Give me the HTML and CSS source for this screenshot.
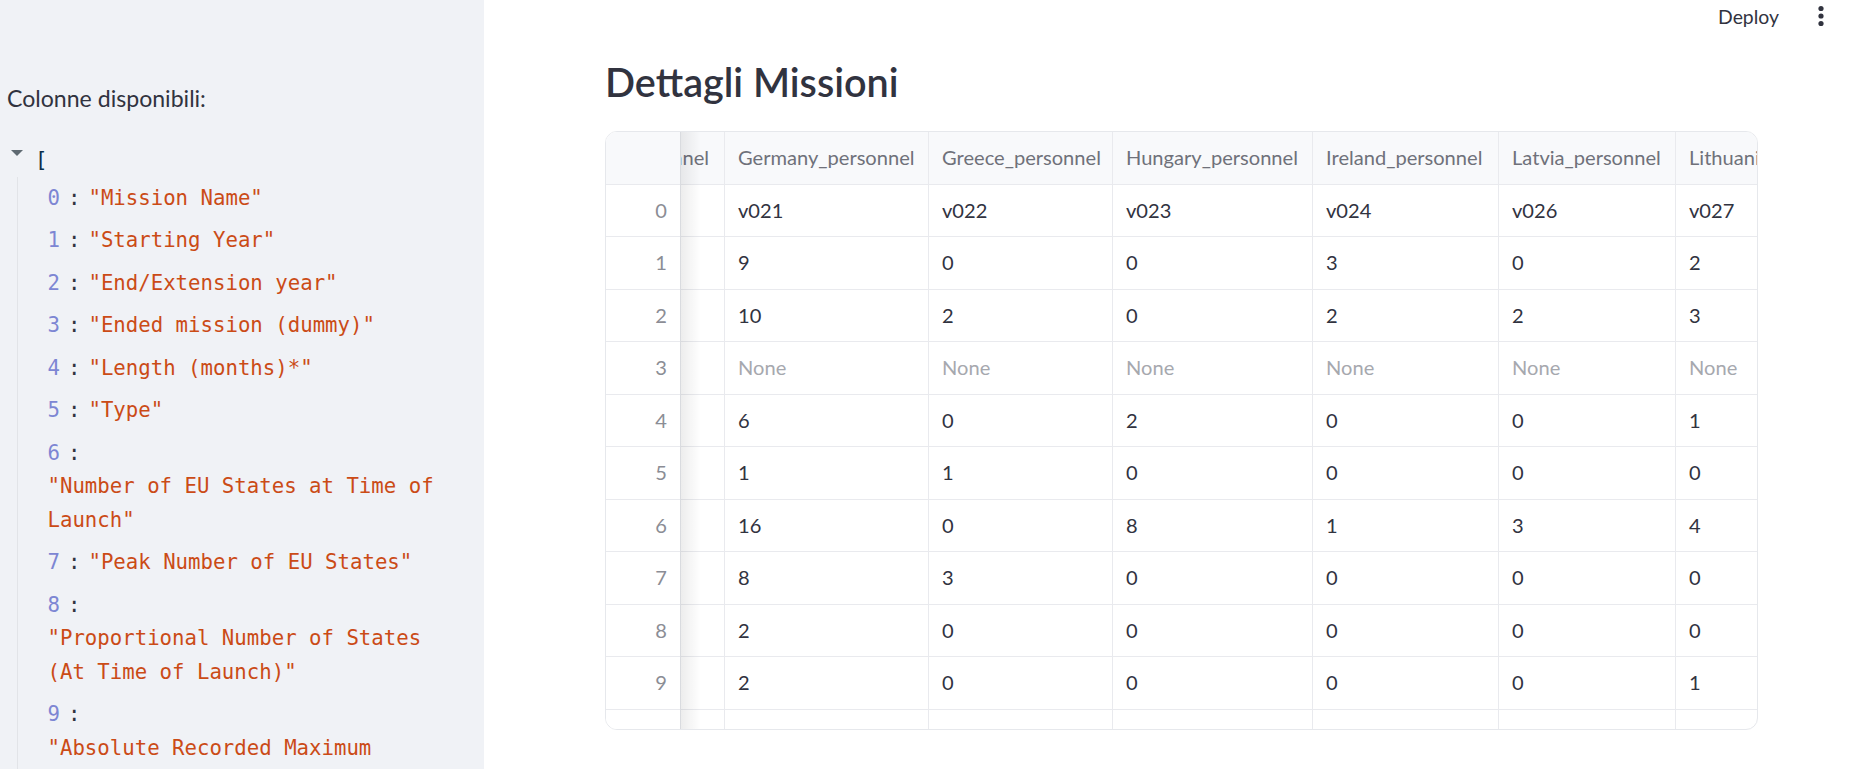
FILE: index.html
```html
<!DOCTYPE html>
<html lang="it">
<head>
<meta charset="utf-8">
<title>Dettagli Missioni</title>
<link rel="stylesheet" href="styles.css">
</head>
<body>
<div class="app">
  <aside class="sidebar">
    <p class="label">Colonne disponibili:</p>
    <div class="json">
      <div class="json-root"><span class="caret"></span><span class="bracket">[</span></div>
      <div class="json-items">
        <div class="json-item"><span class="key">0</span><span class="colon">:</span><span class="str">"Mission Name"</span></div>
        <div class="json-item"><span class="key">1</span><span class="colon">:</span><span class="str">"Starting Year"</span></div>
        <div class="json-item"><span class="key">2</span><span class="colon">:</span><span class="str">"End/Extension year"</span></div>
        <div class="json-item"><span class="key">3</span><span class="colon">:</span><span class="str">"Ended mission (dummy)"</span></div>
        <div class="json-item"><span class="key">4</span><span class="colon">:</span><span class="str">"Length (months)*"</span></div>
        <div class="json-item"><span class="key">5</span><span class="colon">:</span><span class="str">"Type"</span></div>
        <div class="json-item"><span class="key">6</span><span class="colon">:</span><span class="str">"Number of EU States at Time of Launch"</span></div>
        <div class="json-item"><span class="key">7</span><span class="colon">:</span><span class="str">"Peak Number of EU States"</span></div>
        <div class="json-item"><span class="key">8</span><span class="colon">:</span><span class="str">"Proportional Number of States (At Time of Launch)"</span></div>
        <div class="json-item"><span class="key">9</span><span class="colon">:</span><span class="str">"Absolute Recorded Maximum Personnel"</span></div>
        <div class="json-item"><span class="key">10</span><span class="colon">:</span><span class="str">"Austria_personnel"</span></div>
      </div>
    </div>
  </aside>

  <main class="main">
    <header class="toolbar">
      <button class="deploy">Deploy</button>
      <button class="menu" aria-label="Menu">
        <svg width="24" height="24" viewBox="0 0 24 24"><circle cx="12" cy="4.5" r="2.6" fill="#31333f"/><circle cx="12" cy="12" r="2.6" fill="#31333f"/><circle cx="12" cy="19.5" r="2.6" fill="#31333f"/></svg>
      </button>
    </header>

    <section class="content">
      <h3 class="title">Dettagli Missioni</h3>

      <div class="grid">
        <div class="idx">
          <div class="cell head"></div>
          <div class="cell">0</div><div class="cell">1</div><div class="cell">2</div><div class="cell">3</div><div class="cell">4</div><div class="cell">5</div><div class="cell">6</div><div class="cell">7</div><div class="cell">8</div><div class="cell">9</div><div class="cell">10</div>
        </div>
        <div class="scroller">
          <div class="strip">
            <div class="col col-clip w-france">
              <div class="cell head">France_personnel</div>
              <div class="cell"></div><div class="cell"></div><div class="cell"></div><div class="cell"></div><div class="cell"></div><div class="cell"></div><div class="cell"></div><div class="cell"></div><div class="cell"></div><div class="cell"></div><div class="cell"></div>
            </div>
            <div class="col w-germany">
              <div class="cell head">Germany_personnel</div>
              <div class="cell">v021</div><div class="cell">9</div><div class="cell">10</div><div class="cell none">None</div><div class="cell">6</div><div class="cell">1</div><div class="cell">16</div><div class="cell">8</div><div class="cell">2</div><div class="cell">2</div><div class="cell">3</div>
            </div>
            <div class="col w-greece">
              <div class="cell head">Greece_personnel</div>
              <div class="cell">v022</div><div class="cell">0</div><div class="cell">2</div><div class="cell none">None</div><div class="cell">0</div><div class="cell">1</div><div class="cell">0</div><div class="cell">3</div><div class="cell">0</div><div class="cell">0</div><div class="cell">0</div>
            </div>
            <div class="col w-hungary">
              <div class="cell head">Hungary_personnel</div>
              <div class="cell">v023</div><div class="cell">0</div><div class="cell">0</div><div class="cell none">None</div><div class="cell">2</div><div class="cell">0</div><div class="cell">8</div><div class="cell">0</div><div class="cell">0</div><div class="cell">0</div><div class="cell">0</div>
            </div>
            <div class="col w-ireland">
              <div class="cell head">Ireland_personnel</div>
              <div class="cell">v024</div><div class="cell">3</div><div class="cell">2</div><div class="cell none">None</div><div class="cell">0</div><div class="cell">0</div><div class="cell">1</div><div class="cell">0</div><div class="cell">0</div><div class="cell">0</div><div class="cell">0</div>
            </div>
            <div class="col w-latvia">
              <div class="cell head">Latvia_personnel</div>
              <div class="cell">v026</div><div class="cell">0</div><div class="cell">2</div><div class="cell none">None</div><div class="cell">0</div><div class="cell">0</div><div class="cell">3</div><div class="cell">0</div><div class="cell">0</div><div class="cell">0</div><div class="cell">0</div>
            </div>
            <div class="col w-lithuania">
              <div class="cell head">Lithuania_personnel</div>
              <div class="cell">v027</div><div class="cell">2</div><div class="cell">3</div><div class="cell none">None</div><div class="cell">1</div><div class="cell">0</div><div class="cell">4</div><div class="cell">0</div><div class="cell">0</div><div class="cell">1</div><div class="cell">0</div>
            </div>
          </div>
        </div>
      </div>
    </section>
  </main>
</div>
</body>
</html>
```

FILE: styles.css
```css
body {
  margin: 0;
  font-family: Lato, "Noto Sans", sans-serif;
  color: #31333f;
  overflow: hidden;
}

.app {
  display: flex;
  height: 100vh;
}

/* ---------- sidebar ---------- */
.sidebar {
  width: 484px;
  flex: none;
  background: #f0f2f6;
  padding: 80px 24px 0 7px;
  box-sizing: border-box;
  overflow: hidden;
}

.label {
  margin: 0;
  font-size: 23.1px;
  line-height: 36px;
}

.json {
  margin-top: 27.5px;
  font-family: "DejaVu Sans Mono", monospace;
  font-size: 20.7px;
  line-height: 33.5px;
}

.json-root {
  display: flex;
  align-items: center;
  height: 33.5px;
}

.caret {
  width: 0;
  height: 0;
  border-left: 6.5px solid transparent;
  border-right: 6.5px solid transparent;
  border-top: 6px solid #5f6a72;
  margin: 0 12px 14px 4px;
}

.bracket {
  color: #0b2e4a;
}

.json-items {
  margin-left: 9.5px;
  border-left: 1px solid #e2e4e8;
  padding-left: 30px;
}

.json-item {
  display: flex;
  flex-wrap: wrap;
  padding: 4.5px 0;
}

.key {
  color: #7d86d3;
}

.colon {
  margin: 0 8px;
  color: #31333f;
}

.str {
  color: #cb4b16;
}

/* ---------- main ---------- */
.main {
  flex: 1;
  min-width: 0;
  display: flex;
  flex-direction: column;
  background: #fff;
}

.toolbar {
  height: 32px;
  display: flex;
  justify-content: flex-end;
  align-items: center;
  padding-right: 20px;
}

.deploy {
  font-family: Lato, "Noto Sans", sans-serif;
  font-size: 19.4px;
  color: #31333f;
  background: none;
  border: 0;
  padding: 0;
  margin-right: 30px;
}

.menu {
  width: 24px;
  height: 24px;
  padding: 0;
  border: 0;
  background: none;
  display: flex;
}

.content {
  padding-left: 121px;
}

.title {
  margin: 24.5px 0 0;
  font-size: 39.6px;
  line-height: 50.4px;
  font-weight: 600;
}

/* ---------- data grid ---------- */
.grid {
  margin-top: 24px;
  width: 1153px;
  height: 599px;
  box-sizing: border-box;
  border: 1px solid #e6e8ec;
  border-radius: 12px;
  overflow: hidden;
  display: flex;
  font-size: 20.1px;
}

.idx {
  width: 75px;
  flex: none;
  box-sizing: border-box;
  border-right: 1px solid #d9dbdf;
  position: relative;
  z-index: 1;
  background: #fff;
}

.idx::after {
  content: "";
  position: absolute;
  top: 0;
  bottom: 0;
  right: -21px;
  width: 20px;
  background: linear-gradient(to right, rgba(0, 0, 0, 0.07), rgba(0, 0, 0, 0));
}

.idx .cell {
  justify-content: flex-end;
  color: #8b8d95;
}

.scroller {
  flex: 1;
  min-width: 0;
  overflow: hidden;
}

.strip {
  display: flex;
  margin-left: -146px;
}

.col {
  flex: none;
  box-sizing: border-box;
  border-right: 1px solid #e9eaee;
}

.w-france { width: 190px; }
.w-germany { width: 204px; }
.w-greece { width: 184px; }
.w-hungary { width: 200px; }
.w-ireland { width: 186px; }
.w-latvia { width: 177px; }
.w-lithuania { width: 200px; }

.cell {
  height: 52.5px;
  box-sizing: border-box;
  border-bottom: 1px solid #e9eaee;
  display: flex;
  align-items: center;
  padding: 0 13px 2px;
  white-space: nowrap;
  overflow: hidden;
}

.cell.head {
  height: 53px;
  background: #f8f9fb;
  color: #6f717a;
}

.col-clip .head {
  justify-content: flex-end;
  padding-right: 15px;
}

.none {
  color: #a6a8ae;
}
```
